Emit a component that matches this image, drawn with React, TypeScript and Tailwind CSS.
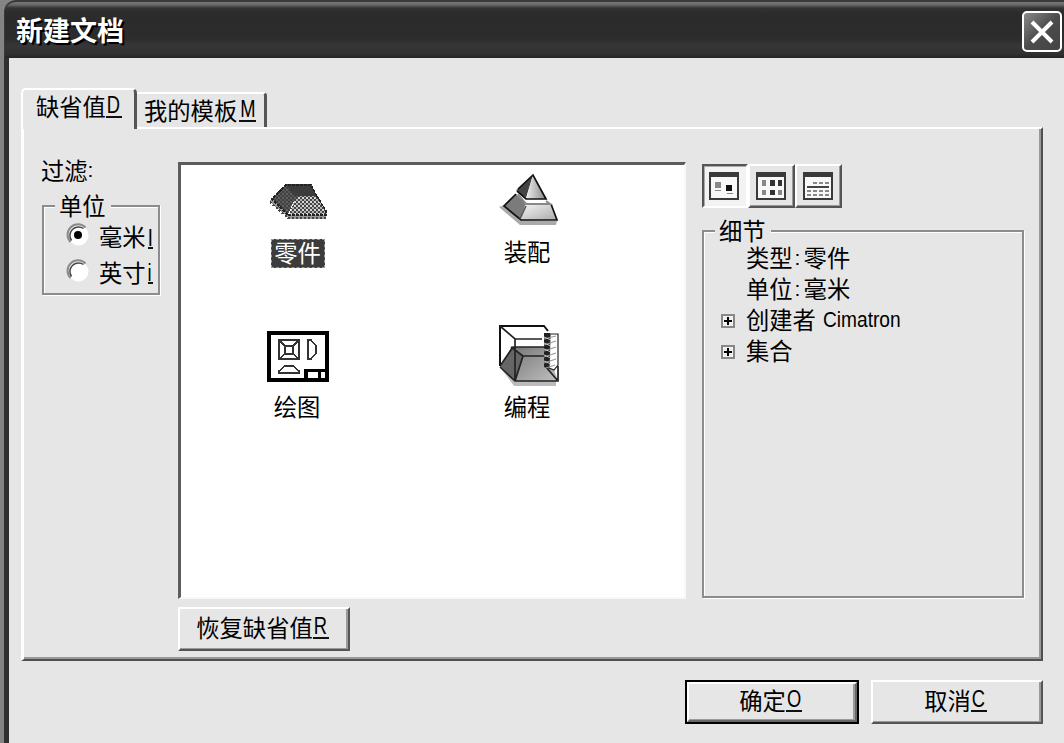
import type { ReactNode } from "react";

function Mnemonic({ children, className = "w-4" }: { children: ReactNode; className?: string }) {
  return (
    <span className={`flex h-[24px] shrink-0 justify-center border-b-2 border-[#111] font-['Liberation_Sans'] text-[23.5px] leading-[22px] ${className}`}>
      <span className="scale-x-[0.78]">{children}</span>
    </span>
  );
}

function Label({ text, hotkey, keyClass }: { text: string; hotkey?: string; keyClass?: string }) {
  return (
    <span className="flex whitespace-nowrap leading-[24px]">
      {text}
      {hotkey && <Mnemonic className={keyClass}>{hotkey}</Mnemonic>}
    </span>
  );
}

function Radio({ checked }: { checked?: boolean }) {
  return (
    <svg width="24" height="24" viewBox="0 0 24 24" className="-mt-px shrink-0">
      <circle cx="12.5" cy="12.5" r="10" fill="#fff" />
      <path d="M4.5 19A10.3 10.3 0 0 1 19.5 4.5" fill="none" stroke="#8a8a8a" strokeWidth="2" />
      <path d="M5.5 17.5A8.6 8.6 0 0 1 17.5 5.5" fill="none" stroke="#444" strokeWidth="1.5" />
      {checked && <circle cx="12" cy="12" r="4" fill="#000" />}
    </svg>
  );
}

function PartIcon() {
  return (
    <svg width="100" height="66" viewBox="0 0 100 66" shapeRendering="crispEdges">
      <defs>
        <pattern id="dots" width="4" height="4" patternUnits="userSpaceOnUse">
          <rect width="4" height="4" fill="#444" />
          <rect width="2" height="2" fill="#d8d8d8" />
          <rect x="2" y="2" width="2" height="2" fill="#b4b4b4" />
        </pattern>
        <pattern id="dark" width="4" height="4" patternUnits="userSpaceOnUse">
          <rect width="4" height="4" fill="#404040" />
          <rect width="2" height="2" fill="#626262" />
          <rect x="2" y="2" width="2" height="2" fill="#585858" />
        </pattern>
      </defs>
      <path d="M19 36L22 34L38 50H76V54H40L22 39Z" fill="#999" />
      <path d="M22 34L36 19H61L67 31H49L45 34L38 49Z" fill="url(#dark)" />
      <path d="M36 20H61L67 31H45Z" fill="#3c3c3c" />
      <path d="M48 31H67L77 47V50H39L45 34Z" fill="url(#dots)" />
      <path d="M67 31L76 46V50H38L22 34L36 20H61L67 31" fill="none" stroke="#222" strokeWidth="1.5" strokeDasharray="3 1" />
      <path d="M20 37L38 53H76" fill="none" stroke="#444" strokeWidth="2" strokeDasharray="2 2" />
    </svg>
  );
}

function AssemblyIcon() {
  return (
    <svg width="100" height="66" viewBox="0 0 100 66">
      <defs>
        <linearGradient id="face" x1="0" x2="1">
          <stop stopColor="#eee" />
          <stop offset="1" stopColor="#888" />
        </linearGradient>
        <linearGradient id="base" x1="0" x2="1" y1="0" y2="1">
          <stop stopColor="#f4f4f4" />
          <stop offset="1" stopColor="#aaa" />
        </linearGradient>
      </defs>
      <path d="M19 42L40 60H76L77 56L40 55L24 40Z" fill="#aaa" />
      <path d="M24 41L36 29L46 38L40 55Z" fill="#7b7b7b" />
      <path d="M46 40H71L77 55H40Z" fill="url(#base)" />
      <path d="M71 39L77 55H41L24 41L36 29" fill="none" stroke="#111" strokeWidth="1.7" />
      <path d="M40 54L46 41" stroke="#555" strokeWidth="1.5" />
      <path d="M38 24L53 10L46 33L36 25Z" fill="#444" />
      <path d="M53 10L66 34H46Z" fill="url(#face)" />
      <path d="M38 24L53 10L66 34H46L37 26" fill="none" stroke="#111" strokeWidth="1.7" />
      <path d="M38 29L46 39H70L66 36" fill="none" stroke="#888" strokeWidth="2" />
    </svg>
  );
}

function DrawingIcon() {
  return (
    <svg width="100" height="66" viewBox="0 0 100 66" shapeRendering="crispEdges" className="-mt-[4px]">
      <rect x="19" y="17" width="58" height="47" fill="#fff" stroke="#000" strokeWidth="4" />
      <g fill="none" stroke="#333" strokeWidth="1.5">
        <rect x="29" y="24" width="20" height="19" />
        <rect x="35" y="30" width="8" height="8" />
        <path d="M29 24l6 6M49 24l-6 6M29 43l6-5M49 43l-6-5M58 24v19h3l5-6v-7l-5-6zM29 57v-2l6-5h8l6 5v2z" />
      </g>
      <path d="M54 53H79V66H54Z" fill="#000" />
      <path d="M58 56h10v6H58zM71 56h4v6h-4z" fill="#fff" />
    </svg>
  );
}

function NcIcon() {
  return (
    <svg width="100" height="76" viewBox="0 0 100 76" className="-mt-[5px]">
      <defs>
        <linearGradient id="floor" x1="0" x2="1" y1="0" y2="1">
          <stop stopColor="#777" />
          <stop offset="1" stopColor="#c0c0c0" />
        </linearGradient>
      </defs>
      <path d="M20 52L34 71H76V66H35L20 50Z" fill="#bbb" />
      <path d="M20 11H64L78 21V66H35L20 51Z" fill="#fff" />
      <path d="M20 51L31 33L43 41L35 66Z" fill="#666" />
      <path d="M32 32H66L78 66H35L43 41Z" fill="url(#floor)" />
      <path d="M20 51V11H64L68 16" fill="none" stroke="#111" strokeWidth="2" />
      <path d="M20 11L35 24H62M35 24V66M20 52L35 66H78V51M35 66L43 41H66M20 51L33 32H64M31 32L43 41M66 52L78 66" fill="none" stroke="#222" strokeWidth="1.7" />
      <path d="M64 18L70 18L71 54L64 52Z" fill="#222" />
      <path d="M70 19H78V50L74 55L69 53Z" fill="#fff" stroke="#222" strokeWidth="1.2" />
      <path d="M64 24l12-3M64 30l12-4M64 36l12-4M64 42l12-4M64 48l12-4M66 53l9-3" stroke="#999" strokeWidth="1.2" />
      <path d="M64 22l7 3M64 28l7 3M64 34l7 3M64 40l7 3M64 46l7 3" stroke="#ccc" strokeWidth="1" />
    </svg>
  );
}

function ViewFrame({ children }: { children: ReactNode }) {
  return (
    <svg width="30" height="28" viewBox="0 0 30 28" shapeRendering="crispEdges">
      <rect x="1" y="1" width="28" height="26" fill="#f8f8f8" stroke="#3a3a3a" strokeWidth="2" />
      <rect x="1" y="1" width="28" height="4" fill="#3a3a3a" />
      {children}
    </svg>
  );
}

function ToolButton({ pressed, children }: { pressed?: boolean; children: ReactNode }) {
  return pressed ? (
    <button className="flex h-[44px] w-[46px] items-center justify-center border-2 border-t-[#555] border-r-white border-b-white border-l-[#555] bg-[#f3f3f3] pr-[3px] shadow-[inset_1px_1px_0_#aaa]">
      {children}
    </button>
  ) : (
    <button className="flex h-[44px] w-[47px] items-center justify-center border-2 border-t-white border-r-[#555] border-b-[#555] border-l-white bg-[#e6e6e6] pr-px pb-px shadow-[inset_-1px_-1px_0_#999]">
      {children}
    </button>
  );
}

function Item({ icon, text, selected }: { icon: ReactNode; text: string; selected?: boolean }) {
  return (
    <div className="flex w-[100px] flex-col items-center">
      {icon}
      <span
        className={
          selected
            ? "mr-[5px] flex h-[29px] w-[54px] justify-center border border-dashed border-[#999] bg-[#3c3c3c] leading-[24px] text-white"
            : "mr-[6px] flex h-[29px] w-[54px] justify-center leading-[25px]"
        }
      >
        {text}
      </span>
    </div>
  );
}

function Expander() {
  return (
    <svg width="14" height="14" viewBox="0 0 14 14" shapeRendering="crispEdges" className="mt-[2px] mr-[11px]">
      <rect x="1" y="1" width="12" height="12" fill="#f0f0f0" stroke="#888" strokeWidth="1.5" />
      <path d="M3 7h8M7 3v8" stroke="#000" strokeWidth="2" />
    </svg>
  );
}

function PushButton({ children, className = "" }: { children: ReactNode; className?: string }) {
  return (
    <button className={`flex items-start justify-center border-2 border-t-white border-r-[#555] border-b-[#555] border-l-white bg-[#e6e6e6] pt-[6px] pr-[3px] shadow-[inset_-2px_-1px_0_#9a9a9a] ${className}`}>
      {children}
    </button>
  );
}

export default function App() {
  return (
    <div className="flex h-[743px] w-[1064px] overflow-hidden bg-[#848484] font-['Noto_Sans_CJK_SC',sans-serif] text-[23.3px] text-black">
      <div className="ml-1 flex w-[1060px] flex-col">
        <header className="flex h-[58px] shrink-0 items-start justify-between rounded-tl-[12px] border-t-2 border-l border-[#3a3a3a] bg-[linear-gradient(#777_0px,#666_3px,#333_6px,#2b2b2b_12px,#2c2c2c_36px,#363636_44px,#303030_52px,#242424_56px)] pt-[9px] pr-[2px] pl-[11px]">
          <h1 className="pt-px text-[27px] leading-[36px] font-bold text-white [text-shadow:2px_2px_0_#000]">新建文档</h1>
          <button className="flex h-[41px] w-[40px] items-center justify-center rounded-[5px] border-2 border-white bg-[linear-gradient(135deg,#8a8a8a,#4c4c4c_50%,#444)]">
            <svg width="24" height="24" viewBox="0 0 24 24">
              <path d="M2 2L22 22M22 2L2 22" stroke="#fff" strokeWidth="4" />
            </svg>
          </button>
        </header>

        <main className="flex grow flex-col border-l-[5px] border-[#303030] bg-[#e6e6e6] pt-[30px] pl-[12px]">
          <div className="z-10 flex h-[39px] items-end">
            <div className="-mb-[2px] flex h-[41px] w-[116px] rounded-t-[5px] border-t-2 border-r-[3px] border-l-2 border-t-white border-r-[#555] border-l-white bg-[#e6e6e6] pt-[4px] pl-[13px]">
              <Label text="缺省值" hotkey="D" />
            </div>
            <div className="flex h-[35px] w-[130px] rounded-tr-[4px] border-t-2 border-r-[3px] border-t-white border-r-[#555] pt-[4px] pl-[7px]">
              <Label text="我的模板" hotkey="M" keyClass="w-[17px] ml-[2px]" />
            </div>
          </div>

          <section className="flex h-[534px] w-[1022px] shrink-0 border-t-2 border-r-2 border-b-2 border-l-[3px] border-t-white border-r-[#505050] border-b-[#505050] border-l-white pt-[33px] pl-[18px] shadow-[inset_-2px_-2px_0_#999]">
            <div className="w-[136px]">
              <div className="-ml-px -mt-[4px] flex leading-[24px]">
                过滤<span className="font-['Liberation_Sans'] text-[21px]">:</span>
              </div>
              <div className="mt-[23px] h-[90px] w-[118px] border-2 border-[#8c8c8c] shadow-[1px_1px_0_#fff,inset_1px_1px_0_#fff]">
                <div className="-mt-[14px] ml-[11px] w-[56px] bg-[#e6e6e6] pl-[4px] leading-[24px]">单位</div>
                <div className="mt-[7px] ml-[22px] flex items-start gap-[9px]">
                  <Radio checked />
                  <Label text="毫米" hotkey="I" keyClass="w-[5px] ml-[2px] mt-[3px] !h-[22px]" />
                </div>
                <div className="mt-[11px] ml-[22px] flex items-start gap-[9px]">
                  <Radio />
                  <Label text="英寸" hotkey="i" keyClass="w-[5px] ml-[2px] mt-[2px] !h-[22px]" />
                </div>
              </div>
            </div>

            <div className="w-[524px]">
              <div className="grid h-[437px] w-[508px] grid-cols-[230px_100px] grid-rows-[155px_120px] border-t-[3px] border-r-2 border-b-2 border-l-[3px] border-t-[#5c5c5c] border-r-[#f8f8f8] border-b-[#f8f8f8] border-l-[#5c5c5c] bg-white pl-[69px]">
                <Item icon={<div className="h-[74px]"><PartIcon /></div>} text="零件" selected />
                <Item icon={<div className="h-[74px]"><AssemblyIcon /></div>} text="装配" />
                <Item icon={<div className="h-[74px]"><DrawingIcon /></div>} text="绘图" />
                <Item icon={<div className="h-[74px]"><NcIcon /></div>} text="编程" />
              </div>
              <PushButton className="mt-[8px] h-[44px] w-[172px]">
                <Label text="恢复缺省值" hotkey="R" />
              </PushButton>
            </div>

            <div>
              <div className="mt-[2px] flex">
                <ToolButton pressed>
                  <ViewFrame>
                    <path d="M6 10h6v6H6zM6 18h6v1H6zM18 21h6v1h-6z" fill="#888" />
                    <path d="M17 13h6v6h-6z" fill="#111" />
                  </ViewFrame>
                </ToolButton>
                <ToolButton>
                  <ViewFrame>
                    <path d="M6 8h4v6H6zM6 18h4v5H6zM22 18h4v5h-4z" fill="#888" />
                    <path d="M14 8h5v6h-5zM22 8h4v6h-4zM14 18h5v5h-5z" fill="#333" />
                  </ViewFrame>
                </ToolButton>
                <ToolButton>
                  <ViewFrame>
                    <path d="M10 11h16M4 19h22M4 23h22" stroke="#888" strokeWidth="1.5" strokeDasharray="4 2" />
                    <path d="M4 15h22" stroke="#444" strokeWidth="1.5" />
                  </ViewFrame>
                </ToolButton>
              </div>
              <div className="mt-[22px] h-[368px] w-[322px] border-2 border-[#8c8c8c] shadow-[1px_1px_0_#fff,inset_1px_1px_0_#fff]">
                <div className="-mt-[14px] ml-[11px] w-[56px] bg-[#e6e6e6] pl-[4px] leading-[24px]">细节</div>
                <ul className="ml-[17px]">
                  {[
                    ["类型", "零件"],
                    ["单位", "毫米"],
                  ].map(([name, value]) => (
                    <li key={name} className="flex h-[31px] items-center pl-[25px] leading-[31px]">
                      {name}
                      <span className="w-[11px] pl-[2px] font-['Liberation_Sans'] text-[21px]">:</span>
                      {value}
                    </li>
                  ))}
                  <li className="flex h-[31px] items-center leading-[31px]">
                    <Expander />
                    创建者
                    <span className="ml-[7px] origin-left scale-x-[0.87] font-['Liberation_Sans'] text-[22px]">Cimatron</span>
                  </li>
                  <li className="flex h-[31px] items-center leading-[31px]">
                    <Expander />
                    集合
                  </li>
                </ul>
              </div>
            </div>
          </section>

          <footer className="flex gap-[12px] pt-[19px] pl-[664px]">
            <div className="h-[44px] w-[174px] border-2 border-black bg-black">
              <PushButton className="h-[40px] w-[170px] !border-r-[#666] !border-b-[#666] !pt-[4px]">
                <Label text="确定" hotkey="O" />
              </PushButton>
            </div>
            <PushButton className="h-[44px] w-[172px]">
              <Label text="取消" hotkey="C" />
            </PushButton>
          </footer>
        </main>
      </div>
    </div>
  );
}
